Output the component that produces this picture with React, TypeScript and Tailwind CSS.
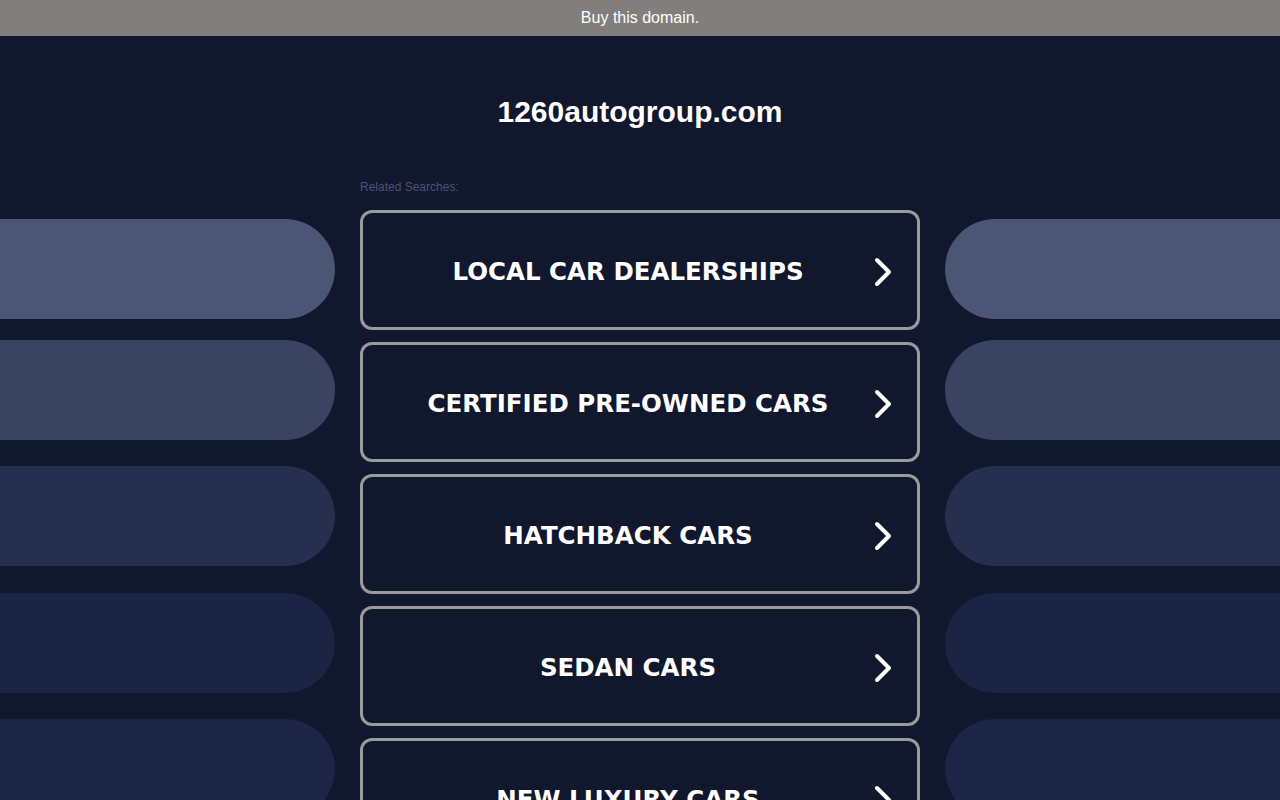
import React from "react";

type Pill = { color: string; className: string };

const searches = [
  "LOCAL CAR DEALERSHIPS",
  "CERTIFIED PRE-OWNED CARS",
  "HATCHBACK CARS",
  "SEDAN CARS",
  "NEW LUXURY CARS",
];

const pills: Pill[] = [
  { color: "bg-[#4b5574]", className: "mt-0" },
  { color: "bg-[#3a435f]", className: "mt-[21px]" },
  { color: "bg-[#262f4d]", className: "mt-[26px]" },
  { color: "bg-[#1c2443]", className: "mt-[27px]" },
  { color: "bg-[#1c2546]", className: "mt-[26px]" },
];

function Chevron() {
  return (
    <svg width="20" height="30" viewBox="0 0 20 30" fill="none" aria-hidden="true">
      <polyline
        points="4,3 16,15 4,27"
        stroke="#ffffff"
        strokeWidth="4"
        strokeLinecap="round"
        strokeLinejoin="round"
      />
    </svg>
  );
}

function PillColumn({ side }: { side: "left" | "right" }) {
  return (
    <div className="flex flex-col pt-[41px]">
      {pills.map((p, i) => (
        <div
          key={i}
          className={`h-[100px] shrink-0 ${p.color} ${p.className} ${
            side === "left" ? "rounded-r-[50px]" : "rounded-l-[50px]"
          }`}
        />
      ))}
    </div>
  );
}

export default function App() {
  return (
    <div className="h-[800px] w-[1280px] overflow-hidden bg-[#11172d] font-['Liberation_Sans',Arial,sans-serif]">
      <div className="flex h-[36px] items-center justify-center bg-[#827e7b] text-[16px] text-white">
        Buy this domain.
      </div>

      <h1 className="mt-[59px] text-center text-[30px] leading-[34px] font-bold text-white">
        1260autogroup.com
      </h1>

      <div className="mt-[49px] grid grid-cols-[335px_560px_335px] gap-x-[25px]">
        <PillColumn side="left" />

        <div className="flex flex-col">
          <p className="mt-[1px] h-[16px] text-[12px] leading-[16px] text-[#4a5477]">Related Searches:</p>
          <div className="mt-[15px] flex flex-col gap-[12px]">
            {searches.map((s) => (
              <a
                key={s}
                href="#"
                className="relative flex h-[120px] shrink-0 items-center rounded-[12px] border-[3px] border-[#9a9a9c] bg-[#11172d]"
              >
                <span className="w-full pt-[4px] pr-[24px] text-center font-['DejaVu_Sans',Verdana,sans-serif] text-[24.5px] leading-none font-bold text-white">
                  {s}
                </span>
                <span className="absolute top-[44px] right-[24px]">
                  <Chevron />
                </span>
              </a>
            ))}
          </div>
        </div>

        <PillColumn side="right" />
      </div>
    </div>
  );
}
